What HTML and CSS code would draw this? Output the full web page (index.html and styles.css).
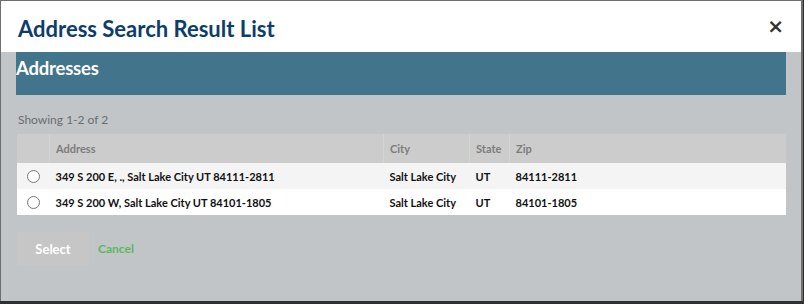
FILE: index.html
```html
<!DOCTYPE html>
<html lang="en">
<head>
    <meta charset="UTF-8">
    <meta name="viewport" content="width=device-width, initial-scale=1.0">
    <title>Address Search Result List</title>
    <link rel="stylesheet" href="styles.css">
</head>
<body>

<div class="modal">
  <div class="modal-header">
    <h1 class="modal-title">Address Search Result List</h1>
    <button class="close-btn">&times;</button>
  </div>
  <div class="modal-body">
    <div class="section-bar">Addresses</div>
    <div class="count">Showing 1-2 of 2</div>
    <table class="result-table">
      <thead>
        <tr>
          <th class="col-pick"></th>
          <th class="col-address">Address</th>
          <th class="col-city">City</th>
          <th class="col-state">State</th>
          <th>Zip</th>
        </tr>
      </thead>
      <tbody>
        <tr class="odd">
          <td class="col-pick"><span class="radio"></span></td>
          <td>349 S 200 E, ., Salt Lake City UT 84111-2811</td>
          <td>Salt Lake City</td>
          <td>UT</td>
          <td>84111-2811</td>
        </tr>
        <tr>
          <td class="col-pick"><span class="radio"></span></td>
          <td>349 S 200 W, Salt Lake City UT 84101-1805</td>
          <td>Salt Lake City</td>
          <td>UT</td>
          <td>84101-1805</td>
        </tr>
      </tbody>
    </table>
    <div class="actions">
      <button class="select-btn">Select</button>
      <a class="cancel-link" href="#">Cancel</a>
    </div>
  </div>
</div>

</body>
</html>
```

FILE: styles.css
```css
:root {
    --title-color: #0d3d6b;
    --bar-color: #42758c;
    --body-gray: #c1c5c8;
}

body {
    margin: 0;
    background-color: #2d2f30;
    font-family: Lato, "Open Sans", sans-serif;
}

.modal {
    width: 800px;
    height: 300px;
    border: 1px solid #6e6e6e;
    border-right-width: 2px;
    border-bottom: none;
    background-color: var(--body-gray);
    display: flex;
    flex-direction: column;
}

.modal-header {
    height: 51px;
    background-color: #fff;
    display: flex;
    align-items: center;
    justify-content: space-between;
    padding: 0 17px 0 17px;
}

.modal-title {
    margin: 3px 0 0 0;
    font-size: 22px;
    font-weight: bold;
    color: var(--title-color);
}

.close-btn {
    background: none;
    border: none;
    font-family: "DejaVu Sans", sans-serif;
    font-size: 20px;
    font-weight: bold;
    color: #333;
    padding: 0;
    margin-top: -2px;
    cursor: pointer;
}

.modal-body {
    padding: 0 15px 0 15px;
}

.section-bar {
    height: 43px;
    background-color: var(--bar-color);
    color: #fff;
    font-size: 18.5px;
    font-weight: bold;
    padding-top: 5px;
    box-sizing: border-box;
    letter-spacing: -0.2px;
}

.count {
    margin: 17px 0 0 2px;
    font-size: 12px;
    color: #6a6d70;
    height: 22px;
}

.result-table {
    width: 769px;
    margin-left: 1px;
    border-collapse: collapse;
    font-size: 11px;
}

.result-table th {
    background-color: #cccccc;
    color: #7c7c7c;
    text-align: left;
    font-weight: bold;
    height: 29px;
    padding: 0 6px;
    border-left: 1px solid #d4d4d4;
}

.result-table th:first-child {
    border-left: none;
}

.result-table td {
    background-color: #fff;
    color: #111;
    font-weight: bold;
    height: 26px;
    padding: 0 6px;
}

.result-table tr.odd td {
    background-color: #f4f4f4;
}

.col-pick {
    width: 20px;
}

.col-address {
    width: 321px;
}

.col-city {
    width: 73px;
}

.col-state {
    width: 27px;
}

.radio {
    display: block;
    width: 11px;
    height: 11px;
    border: 1px solid #777;
    border-radius: 50%;
    background-color: #fff;
    margin-left: 4px;
    margin-top: 1px;
}

.actions {
    margin-top: 17px;
    display: flex;
    align-items: center;
}

.select-btn {
    width: 72px;
    height: 33px;
    margin-left: 1px;
    background-color: #c6c6c6;
    border: none;
    color: #fff;
    font-family: Lato, "Open Sans", sans-serif;
    font-size: 13px;
    font-weight: bold;
}

.cancel-link {
    margin-left: 9px;
    color: #5cb85c;
    font-size: 12px;
    font-weight: bold;
    text-decoration: none;
}
```
